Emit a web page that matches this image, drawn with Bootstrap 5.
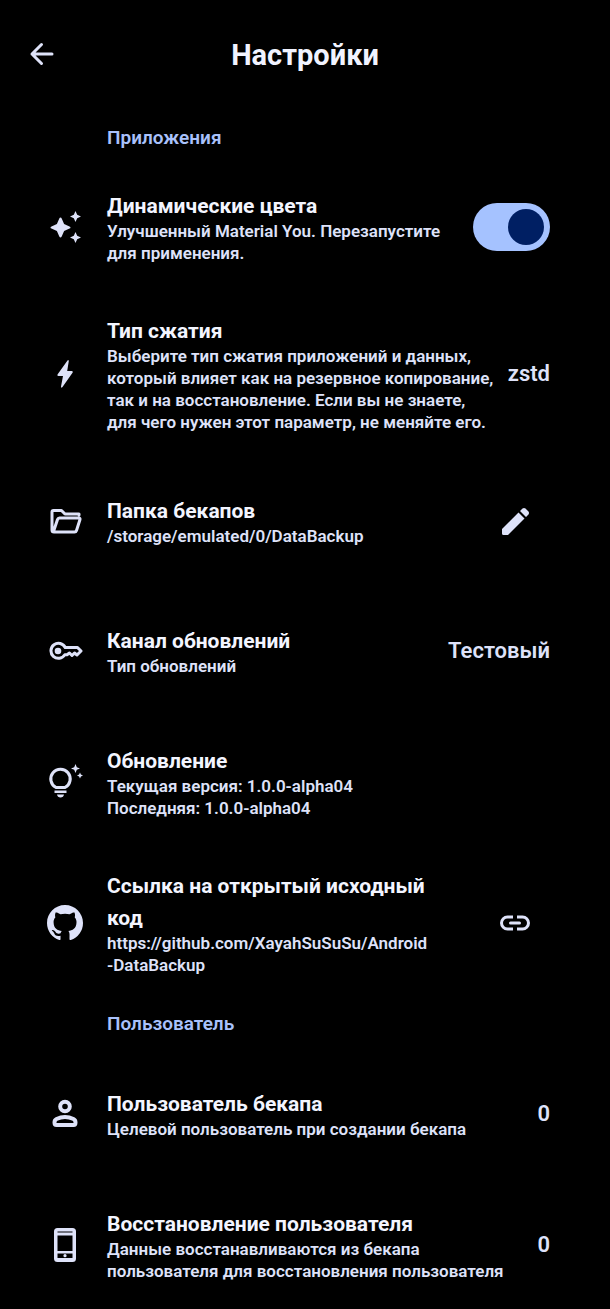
<!DOCTYPE html>
<html lang="ru" data-bs-theme="dark">
<head>
<meta charset="utf-8">
<meta name="viewport" content="width=device-width, initial-scale=1">
<title>Настройки</title>
<link href="https://cdn.jsdelivr.net/npm/bootstrap@5.3.0/dist/css/bootstrap.min.css" rel="stylesheet">
<style>
  body { background: #000; color: #dee2f9; font-family: Roboto, "Noto Sans", sans-serif; font-weight: 600; }
  .top-bar { display: grid; grid-template-columns: 48px 1fr 48px; height: 110px; padding: 0 18px; }
  .top-bar h1 { font-size: 29px; line-height: 40px; font-weight: 700; color: #f1f3ff; }
  .plain { background: none; border: 0; padding: 0; color: inherit; font-weight: 600; }
  .group-title { font-size: 19px; line-height: 24px; font-weight: 600; color: #a9c1fb; margin: 0; padding: 10px 60px 10px 107px; }
  .group-title.first { padding: 16px 60px 15px 107px; }
  .setting { padding: 25px 60px 26px 47px; gap: 12px; }
  .setting.mid { min-height: 124px; }
  .setting.tall { min-height: 137px; }
  .lead-icon { width: 36px; height: 36px; margin-right: 12px; }
  .setting h3 { font-size: 21px; line-height: 32px; font-weight: 700; color: #f3f5ff; margin: 0 0 -2px; }
  .setting p { font-size: 17px; line-height: 22px; margin: 0; }
  .value { font-size: 22px; line-height: 32px; }
  .icon-btn { width: 70px; height: 48px; }
  .form-check-input.toggle { width: 77px; height: 48px; margin: 0; border: 0; background-color: #a5c2ff; border-radius: 24px;
    background-image: url("data:image/svg+xml,%3Csvg xmlns='http://www.w3.org/2000/svg' viewBox='0 0 48 48'%3E%3Ccircle cx='24' cy='24' r='18' fill='%23001f63'/%3E%3C/svg%3E") !important; background-size: 48px 48px; }
  .form-check-input.toggle:checked { background-color: #a5c2ff; background-position: right center; }
  svg { fill: currentColor; }
  .line { fill: none; stroke: currentColor; stroke-width: 3; stroke-linejoin: round; stroke-linecap: round; }
  .line.heavy { stroke-width: 4; }
  .line.flat { stroke-linecap: butt; }
</style>
</head>
<body>
<header class="top-bar align-items-center">
  <button class="plain d-flex justify-content-center" type="button" aria-label="Назад">
    <svg width="36" height="36" viewBox="0 0 36 36"><path class="line" d="M28 17H8M17.500 7.500L8 17L17.500 26.500"/></svg>
  </button>
  <h1 class="text-center m-0">Настройки</h1>
</header>
<main>
  <h2 class="group-title first">Приложения</h2>

  <div class="setting d-flex align-items-center">
    <svg class="lead-icon flex-shrink-0" viewBox="0 0 36 36"><path d="M13.500 8.500Q14.300 8.500 14.700 9.500L17.100 15L22.500 17.400Q24.500 18.500 22.500 19.600L17.100 22L14.700 27.500Q13.500 29.500 12.300 27.500L9.900 22L4.500 19.600Q2.500 18.500 4.500 17.400L9.900 15L12.300 9.500Q12.700 8.500 13.500 8.500ZM28.500 2L30.200 5.800L34 7.500L30.200 9.200L28.500 13L26.800 9.200L23 7.500L26.800 5.800ZM28.500 23L30.200 26.800L34 28.500L30.200 30.200L28.500 34L26.800 30.200L23 28.500L26.800 26.800Z"/></svg>
    <div class="flex-grow-1">
      <h3><label for="dyn">Динамические цвета</label></h3>
      <p>Улучшенный Material You. Перезапустите для применения.</p>
    </div>
    <div class="form-switch p-0 m-0 flex-shrink-0 d-flex">
      <input class="form-check-input toggle" type="checkbox" role="switch" id="dyn" checked>
    </div>
  </div>

  <div class="setting d-flex align-items-center">
    <svg class="lead-icon flex-shrink-0" viewBox="0 0 36 36"><path d="M20.500 4.500L10.500 18.500Q10 20 11.500 20H16L14 30.500Q14 32.500 15.500 31L25.700 16.500Q26.300 15 24.800 15H20.200L21.800 5Q21.500 3.500 20.500 4.500Z"/></svg>
    <div class="flex-grow-1">
      <h3>Тип сжатия</h3>
      <p>Выберите тип сжатия приложений и данных,<br>который влияет как на резервное копирование,<br>так и на восстановление. Если вы не знаете,<br>для чего нужен этот параметр, не меняйте его.</p>
    </div>
    <button class="plain value" type="button">zstd</button>
  </div>

  <div class="setting mid d-flex align-items-center">
    <svg class="lead-icon flex-shrink-0" viewBox="0 0 36 36"><path class="line" d="M32 12V11H18L14.500 7.500H6.500Q5 7.500 5 9V27Q5 29 7 29H27.500Q29 29 29.500 27.500L33 16.500Q33.300 15 31.800 15H12.500Q11 15 10.500 16.500L6.500 28.500"/></svg>
    <div class="flex-grow-1">
      <h3>Папка бекапов</h3>
      <p>/storage/emulated/0/DataBackup</p>
    </div>
    <button class="plain icon-btn d-flex align-items-center justify-content-center flex-shrink-0" type="button" aria-label="Изменить папку">
      <svg width="36" height="36" viewBox="0 0 36 36"><path d="M5 26L21.500 9.500L27.500 15.500L11 32H6.500Q5 32 5 30.500ZM23 8L25.500 5.500Q27 4.500 28.500 5.500L31.500 8.500Q32.500 10 31.500 11.500L29 14Z"/></svg>
    </button>
  </div>

  <div class="setting tall d-flex align-items-center">
    <svg class="lead-icon flex-shrink-0" viewBox="0 0 36 36"><path class="line" d="M18.200 14.500H30.500L34 18L30 22L27.500 20L25 22.500L22.500 20L20 21.800H17.800A7.500 7.500 0 1 1 18.200 14.500Z"/><circle cx="11" cy="18" r="3.300"/></svg>
    <div class="flex-grow-1">
      <h3>Канал обновлений</h3>
      <p>Тип обновлений</p>
    </div>
    <button class="plain value" type="button">Тестовый</button>
  </div>

  <div class="setting d-flex align-items-center">
    <svg class="lead-icon flex-shrink-0" viewBox="0 0 36 36"><path class="line" d="M9 23.500A9.700 9.700 0 1 1 18 23.500Z"/><path d="M7.500 26.500H19.500V29H7.500ZM10 30.500H17Q16.500 33.500 13.500 33.500T10 30.500ZM28.500 0L29.800 3.200L33 4.500L29.800 5.800L28.500 9L27.200 5.800L24 4.500L27.200 3.200ZM33 8.500L33.900 10.600L36 11.500L33.900 12.400L33 14.500L32.100 12.400L30 11.500L32.100 10.600Z"/></svg>
    <div class="flex-grow-1">
      <h3>Обновление</h3>
      <p>Текущая версия: 1.0.0-alpha04<br>Последняя: 1.0.0-alpha04</p>
    </div>
  </div>

  <div class="setting d-flex align-items-center">
    <svg class="lead-icon flex-shrink-0" viewBox="0 0 16 16"><path d="M8 0C3.580 0 0 3.580 0 8c0 3.540 2.290 6.530 5.470 7.590.4.070.55-.17.55-.38 0-.19-.01-.82-.01-1.490-2.010.37-2.530-.49-2.690-.94-.09-.23-.48-.94-.82-1.130-.28-.15-.68-.52-.01-.53.63-.01 1.080.58 1.230.82.72 1.210 1.870.87 2.330.66.07-.52.28-.87.51-1.070-1.780-.2-3.640-.89-3.640-3.950 0-.87.31-1.590.82-2.150-.08-.2-.36-1.020.08-2.120 0 0 .67-.21 2.200.82.64-.18 1.320-.27 2-.27s1.360.09 2 .27c1.530-1.040 2.200-.82 2.200-.82.44 1.100.16 1.920.08 2.120.51.56.82 1.270.82 2.150 0 3.070-1.870 3.750-3.650 3.950.29.25.54.73.54 1.480 0 1.070-.01 1.930-.01 2.200 0 .21.15.46.55.38A8.010 8.010 0 0 0 16 8c0-4.420-3.580-8-8-8Z"/></svg>
    <div class="flex-grow-1">
      <h3>Ссылка на открытый исходный<br>код</h3>
      <p>https://github.com/XayahSuSuSu/Android<br>-DataBackup</p>
    </div>
    <a class="icon-btn d-flex align-items-center justify-content-center flex-shrink-0 text-reset" href="https://github.com/XayahSuSuSu/Android-DataBackup" aria-label="Открыть ссылку">
      <svg width="36" height="36" viewBox="0 0 36 36"><path class="line flat" d="M16 12H10.500A6 6 0 0 0 10.500 24H16M20 12H25.500A6 6 0 0 1 25.500 24H20"/><path class="line" d="M13.500 18H22.500"/></svg>
    </a>
  </div>

  <h2 class="group-title">Пользователь</h2>

  <div class="setting tall d-flex align-items-center">
    <svg class="lead-icon flex-shrink-0" viewBox="0 0 36 36"><circle class="line heavy" cx="18" cy="10.500" r="4.800"/><path class="line heavy" d="M7.500 26.500Q7.500 24 9.500 23Q18 19 26.500 23Q28.500 24 28.500 26.500Q28.500 29 26.500 29H9.500Q7.500 29 7.500 26.500Z"/></svg>
    <div class="flex-grow-1">
      <h3>Пользователь бекапа</h3>
      <p>Целевой пользователь при создании бекапа</p>
    </div>
    <button class="plain value" type="button">0</button>
  </div>

  <div class="setting d-flex align-items-center">
    <svg class="lead-icon flex-shrink-0" viewBox="0 0 36 36"><path fill-rule="evenodd" d="M10.500 1H25.500Q29 1 29 4.500V31.500Q29 35 25.500 35H10.500Q7 35 7 31.500V4.500Q7 1 10.500 1ZM10.500 4.500V5.500H25.500V4.500ZM10.500 8.500V24H25.500V8.500ZM10.500 26.500V31H25.500V26.500Z"/><circle cx="18" cy="28.700" r="1.600"/></svg>
    <div class="flex-grow-1">
      <h3>Восстановление пользователя</h3>
      <p>Данные восстанавливаются из бекапа<br>пользователя для восстановления пользователя</p>
    </div>
    <button class="plain value" type="button">0</button>
  </div>
</main>
<script src="https://cdn.jsdelivr.net/npm/bootstrap@5.3.0/dist/js/bootstrap.bundle.min.js"></script>
</body>
</html>
